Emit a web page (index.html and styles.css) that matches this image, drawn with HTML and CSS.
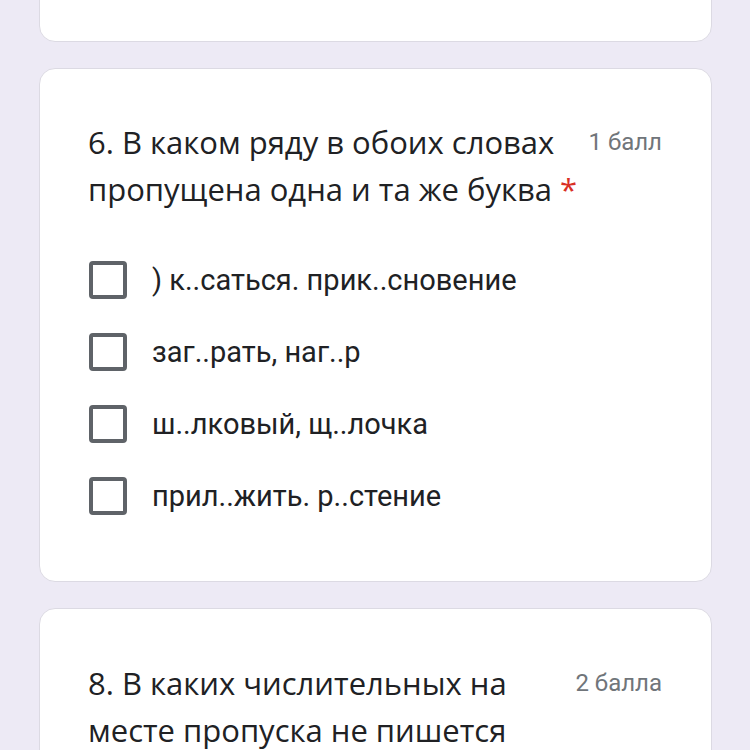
FILE: index.html
```html
<!DOCTYPE html>
<html lang="ru">
<head>
<meta charset="utf-8">
<link rel="stylesheet" href="styles.css">
</head>
<body>
<main class="page">
  <section class="card card-top"></section>

  <section class="card">
    <div class="q-head">
      <h2 class="q-title">6. В каком ряду в обоих словах пропущена одна и та же буква <span class="req">*</span></h2>
      <span class="q-points">1 балл</span>
    </div>
    <ul class="options">
      <li class="option"><span class="box"></span><span class="label">) к..саться. прик..сновение</span></li>
      <li class="option"><span class="box"></span><span class="label">заг..рать, наг..р</span></li>
      <li class="option"><span class="box"></span><span class="label">ш..лковый, щ..лочка</span></li>
      <li class="option"><span class="box"></span><span class="label">прил..жить. р..стение</span></li>
    </ul>
  </section>

  <section class="card card-next">
    <div class="q-head">
      <h2 class="q-title">8. В каких числительных на месте пропуска не пишется</h2>
      <span class="q-points">2 балла</span>
    </div>
  </section>
</main>
</body>
</html>
```

FILE: styles.css
```css
html, body {
  margin: 0;
  padding: 0;
  background: #edeaf5;
  height: 750px;
  overflow: hidden;
}

.page {
  display: flex;
  flex-direction: column;
  gap: 26px;
  width: 673px;
  margin: 0 0 0 39px;
}

.card {
  background: #ffffff;
  border: 1px solid #dcdae3;
  border-radius: 16px;
  box-sizing: border-box;
  padding: 50px 49px 49px 48px;
}

.card-top {
  height: 80px;
  margin-top: -38px;
  padding: 0;
}

.card-next {
  padding-top: 51px;
  height: 200px;
}

.q-head {
  display: flex;
  align-items: flex-start;
  justify-content: space-between;
  gap: 8px;
}

.q-title {
  margin: 0;
  font-family: "Open Sans", "Noto Sans", sans-serif;
  font-weight: 400;
  font-size: 31px;
  line-height: 47px;
  color: #202124;
}

.req {
  color: #d93025;
}

.q-points {
  flex: none;
  font-family: Roboto, "Noto Sans", sans-serif;
  font-size: 24px;
  line-height: 47px;
  color: #70757a;
}

.options {
  list-style: none;
  margin: 31px 0 0 0;
  padding: 0;
}

.option {
  display: flex;
  align-items: center;
  height: 72px;
}

.box {
  flex: none;
  width: 38px;
  height: 38px;
  box-sizing: border-box;
  border: 4px solid #5f6368;
  border-radius: 4px;
  margin-left: 1px;
}

.label {
  margin-left: 25px;
  font-family: Roboto, "Noto Sans", sans-serif;
  font-size: 29px;
  color: #202124;
}
```
